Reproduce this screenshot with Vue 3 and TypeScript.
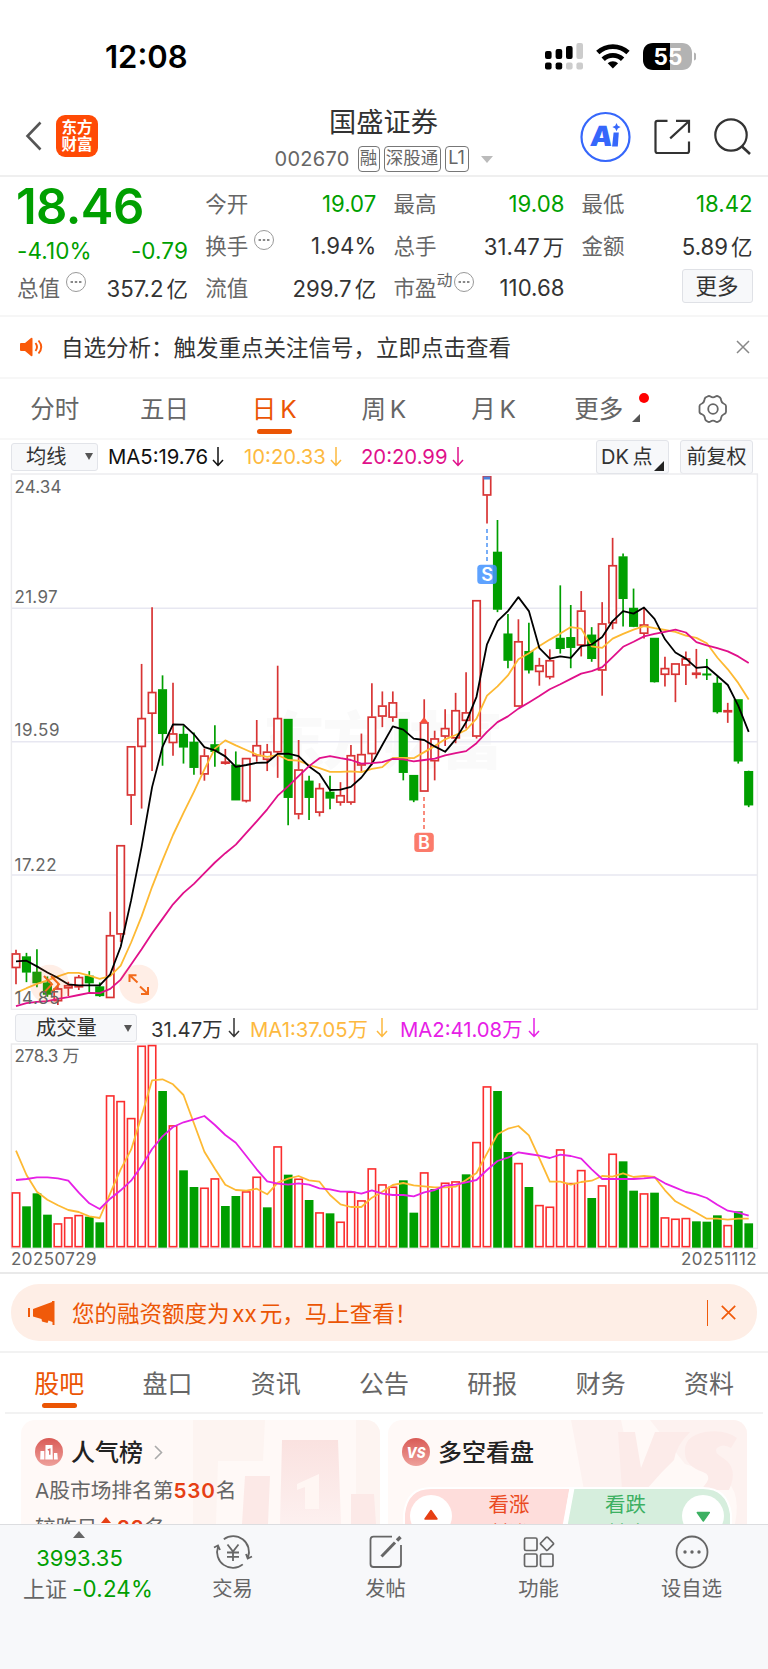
<script setup lang="ts">
type Candle = { up: boolean; high: number; top: number; bottom: number; low: number }

const STEP = 10.467
const FIRST = 16
const xAt = (i: number): number => FIRST + i * STEP
const priceY = (v: number): number => 470 + v / 2.8
const volumeY = (v: number): number => 1010 + v / 3

const rawCandles =
  'R1343,1354,1394,1440 G1352,1363,1406,1434 G1342,1406,1436,1448 G1418,1436,1468,1475 R1440,1452,1487,1498 R1433,1443,1451,1473 R1414,1420,1448,1456 G1403,1417,1436,1463 G1435,1447,1472,1475 R1237,1303,1478,1478 ' +
  'R1051,1051,1300,1322 R774,774,911,994 R543,695,775,948 R384,622,682,843 G575,615,738,828 R596,738,764,800 G716,740,776,822 G735,762,833,853 R780,800,852,870 G715,769,788,831 ' +
  'R781,817,822,825 G788,826,924,924 R807,807,927,931 R700,771,801,817 R767,789,811,843 R548,695,790,862 G698,698,917,995 R756,839,964,978 G856,871,917,980 R877,891,959,970 ' +
  'G856,902,919,950 R874,911,931,940 R770,799,931,937 R738,796,827,847 R597,691,795,827 R620,660,690,720 R620,651,693,705 G698,698,847,869 G855,855,924,930 R642,707,900,900 ' +
  'R730,752,815,869 R670,723,746,773 R624,673,751,765 R566,679,702,724 R365,365,746,752 R18,18,71,150 G140,230,390,398 G403,459,533,555 R418,480,662,662 G428,508,560,570 ' +
  'R526,547,565,604 R502,533,580,586 G323,471,500,514 G378,469,497,555 R339,394,491,522 G440,462,528,537 R370,430,561,632 R190,267,429,446 G234,243,360,438 G332,387,438,440 ' +
  'R386,433,458,472 G471,471,593,595 R523,555,573,606 R542,542,573,650 R508,528,547,602 R501,568,573,584 G529,571,573,588 G578,597,677,682 R652,673,678,708 G643,643,815,822 ' +
  'G842,844,938,944'

const candles: Candle[] = rawCandles.split(' ').map((s) => {
  const [high, top, bottom, low] = s.slice(1).split(',').map((n) => priceY(Number(n)))
  return { up: s[0] === 'R', high, top, bottom, low }
})

const rawVolumes =
  'R547 G589 G550 G614 R640 R622 R615 G620 G637 R256 R273 R324 R107 R105 G243 R346 G481 G531 R533 R505 G588 G558 R544 R500 G592 R409 G494 R506 G570 R607 G610 R635 R545 R571 R475 R523 ' +
  'R530 G511 G608 R487 G537 R518 R514 G493 R396 R229 G243 G426 R459 G531 R585 R590 R418 R519 R480 G564 R526 R431 G454 G542 R550 G548 R622 R626 R624 G634 G635 G616 R645 G604 G640'
const volumes = rawVolumes.split(' ').map((s) => ({ up: s[0] === 'R', top: volumeY(Number(s.slice(1))) }))
const VOL_BASE = volumeY(713)

const toPoints = (values: string, scale: (v: number) => number): string =>
  values
    .split(' ')
    .map((v, i) => `${xAt(i).toFixed(1)},${scale(Number(v)).toFixed(1)}`)
    .join(' ')

const ma5 = toPoints(
  '1376 1374 1390 1407 1422 1440 1443 1443 1443 1412 1335 1205 1055 888 775 712 713 740 776 785 802 831 826 820 819 795 794 801 830 851 896 895 887 861 823 770 718 727 752 756 774 789 754 706 635 488 423 395 356 395 499 528 522 526 493 489 468 423 395 402 385 417 474 511 528 554 551 576 602 660 733',
  priceY,
)
const ma10 = toPoints(
  '1464 1451 1439 1429 1418 1408 1408 1416 1425 1417 1388 1323 1250 1167 1093 1022 960 901 838 780 757 771 784 797 803 798 812 814 826 835 845 845 844 846 837 832 806 806 807 790 773 754 742 728 696 632 606 575 530 513 493 475 458 440 444 494 498 472 459 447 437 443 448 453 464 470 485 525 558 596 643',
  priceY,
)
const ma20 = toPoints(
  '1501 1493 1489 1487 1481 1476 1470 1464 1465 1453 1427 1385 1342 1297 1257 1216 1184 1159 1129 1099 1073 1049 1016 984 950 912 886 857 829 807 801 807 812 822 821 818 809 810 816 812 808 799 793 787 765 733 706 690 668 651 633 614 600 585 570 563 552 524 495 481 466 459 453 447 455 482 491 499 508 522 540',
  priceY,
)
const volMa1 = toPoints(
  '422 495 545 569 586 600 606 619 624 550 478 419 318 211 208 223 255 340 425 476 524 540 542 536 553 518 506 498 511 515 555 583 591 591 563 545 525 519 526 529 532 532 530 510 489 430 373 356 348 376 445 515 515 524 516 512 498 500 490 501 498 501 541 574 591 608 626 626 629 626 626',
  volumeY,
)
const volMa2 = toPoints(
  '510 507 502 502 505 512 548 580 597 566 541 512 468 417 379 351 337 328 318 345 375 398 438 478 514 521 524 520 524 535 538 545 545 551 541 551 555 555 559 547 540 527 524 517 510 480 453 443 427 432 437 444 434 438 446 478 507 507 507 507 505 502 520 533 546 553 564 584 602 608 617',
  volumeY,
)

const axisLabels = [
  { text: '24.34', y: 493, w: 47 },
  { text: '21.97', y: 602.5, w: 43 },
  { text: '19.59', y: 736, w: 45 },
  { text: '17.22', y: 870.5, w: 42 },
  { text: '14.85', y: 1004, w: 45 },
]

const periods = ['分时', '五日', '日 K', '周 K', '月 K', '更多']
const sections = ['股吧', '盘口', '资讯', '公告', '研报', '财务', '资料']
</script>

<template>
  <main class="page">
    <div class="status">
      <span class="clock">12:08</span>
      <svg class="status-icons" width="156" height="30" viewBox="540 41 156 30">
        <g fill="#000">
          <rect x="545" y="51" width="6.6" height="8" rx="2" />
          <rect x="555.6" y="49" width="6.6" height="10" rx="2" />
          <rect x="566" y="46" width="6.6" height="13" rx="2" />
          <rect x="545" y="62.5" width="6.6" height="7" rx="2" />
          <rect x="555.6" y="62.5" width="6.6" height="7" rx="2" />
        </g>
        <g fill="#ccc">
          <rect x="576.4" y="43" width="6.6" height="16" rx="2" />
          <rect x="566" y="62.5" width="6.6" height="7" rx="2" />
          <rect x="576.4" y="62.5" width="6.6" height="7" rx="2" />
        </g>
        <g fill="none" stroke="#000" stroke-width="4.8">
          <path d="M597.8 52.6a22 22 0 0 1 30.2 0" />
          <path d="M603.2 59.200a14 14 0 0 1 19.4 0" />
        </g>
        <path d="M612.9 68.500l-5.200-5.200a7.400 7.400 0 0 1 10.400 0z" fill="#000" />
        <path d="M670 43h-17c-6 0-10 4-10 10v7c0 6 4 10 10 10h17z" fill="#000" />
        <path d="M670 43h12c6 0 10 4 10 10v7c0 6-4 10-10 10h-12z" fill="#b3b3b3" />
        <path d="M694 52.5c3.5 1 3.5 7 0 8z" fill="#b3b3b3" />
        <text x="668" y="65" text-anchor="middle" class="battery">55</text>
      </svg>
    </div>

    <header class="header">
      <div class="head-left">
        <svg width="20" height="32" viewBox="0 0 20 32"><path d="M16.5 2.5 3.5 16l13 13.500" fill="none" stroke="#555" stroke-width="2.6" /></svg>
        <div class="logo"><span>东方</span><span>财富</span></div>
      </div>
      <div class="head-mid">
        <h1>国盛证券</h1>
        <div class="code-row">
          <span class="code">002670</span>
          <span class="badge b1">融</span><span class="badge b2">深股通</span><span class="badge b3">L1</span>
          <i class="caret"></i>
        </div>
      </div>
      <svg class="head-right" width="180" height="52" viewBox="578 111 180 52">
        <circle cx="605.5" cy="137" r="24" fill="none" stroke="#3667fb" stroke-width="2.2" />
        <text x="590" y="146.500" class="ai" transform="skewX(-6) translate(15 0)">A</text>
        <path d="M613.6 132.500h5.200l-1 14h-5.700z" fill="#3667fb" />
        <path d="M616.500 123l1.300 2.800 2.800 1.300-2.800 1.300-1.300 2.800-1.300-2.800-2.800-1.300 2.800-1.300z" fill="#3667fb" />
        <g fill="none" stroke="#333" stroke-width="2.200">
          <path d="M667.500 120.800H657.500q-2 0-2 2V151q0 2 2 2h29.500q2 0 2-2V141.500" />
          <path d="M676 120.800h13v12M688 122l-17.800 16.400" />
          <circle cx="731" cy="135" r="15.700" />
          <path d="M742 146.500l8 7.500" stroke-width="2.600" />
        </g>
      </svg>
    </header>

    <section class="quote">
      <div class="col c1">
        <b class="last">18.46</b>
        <div class="pair down chg"><span>-4.10%</span><span>-0.79</span></div>
        <div class="pair"><span class="lbl">总值<i class="info"></i></span><span>357.2<em>亿</em></span></div>
      </div>
      <div class="col">
        <div class="pair"><span class="lbl">今开</span><span class="down">19.07</span></div>
        <div class="pair"><span class="lbl">换手<i class="info"></i></span><span>1.94%</span></div>
        <div class="pair"><span class="lbl">流值</span><span>299.7<em>亿</em></span></div>
      </div>
      <div class="col">
        <div class="pair"><span class="lbl">最高</span><span class="down">19.08</span></div>
        <div class="pair"><span class="lbl">总手</span><span>31.47<em>万</em></span></div>
        <div class="pair"><span class="lbl">市盈<small>动</small><i class="info tight"></i></span><span>110.68</span></div>
      </div>
      <div class="col">
        <div class="pair"><span class="lbl">最低</span><span class="down">18.42</span></div>
        <div class="pair"><span class="lbl">金额</span><span>5.89<em>亿</em></span></div>
        <div class="pair end"><button class="more">更多</button></div>
      </div>
    </section>

    <section class="notice">
      <svg width="24" height="20" viewBox="0 0 24 20">
        <path d="M1 6h4l6-5q1.500-1 1.500 1v16q0 2-1.500 1L5 14H1q-1 0-1-1V7q0-1 1-1z" fill="#fa5a0a" />
        <path d="M15.500 6q3 4 0 8M18.500 3.500q5.500 6.500 0 13" fill="none" stroke="#fa5a0a" stroke-width="1.900" />
      </svg>
      <span class="notice-text">自选分析：触发重点关注信号，立即点击查看</span>
      <svg class="x" width="14" height="14" viewBox="0 0 14 14"><path d="M1 1l12 12M13 1 1 13" stroke="#888" stroke-width="1.500" /></svg>
    </section>

    <nav class="periods">
      <div v-for="p in periods" :key="p" class="period" :class="{ on: p === '日 K', menu: p === '更多' }">
        <span>{{ p }}</span>
      </div>
      <div class="period">
        <svg width="30" height="30" viewBox="0 0 30 30" fill="none" stroke="#666" stroke-width="1.800" stroke-linejoin="round">
          <path d="M9.500 2.500q1.500-1 3 0 2.500 1.800 5 0 1.500-1 3 0l1.500 1q1 1 1.200 3 .3 2 2.300 3 2.500 1 2.500 2.500v6q0 1.500-2.500 2.500-2 1-2.300 3-.2 2-1.200 3l-1.500 1q-1.500 1-3 0-2.500-1.800-5 0-1.500 1-3 0l-1.500-1q-1-1-1.200-3-.3-2-2.300-3Q1.500 19.500 1.500 18v-6q0-1.500 2.500-2.500 2-1 2.300-3 .2-2 1.200-3z" />
          <circle cx="15" cy="15" r="4.800" />
        </svg>
      </div>
    </nav>

    <div class="ma-bar">
      <button class="select s1">均线<i></i></button>
      <span class="m m5">MA5:19.76<svg class="arr" viewBox="0 0 12 20"><path d="M6 0v18M1 13l5 5.500 5-5.500" /></svg></span>
      <span class="m m10">10:20.33<svg class="arr" viewBox="0 0 12 20"><path d="M6 0v18M1 13l5 5.500 5-5.500" /></svg></span>
      <span class="m m20">20:20.99<svg class="arr" viewBox="0 0 12 20"><path d="M6 0v18M1 13l5 5.500 5-5.500" /></svg></span>
      <button class="tool dk">DK 点</button>
      <button class="tool">前复权</button>
    </div>

    <svg class="chart" width="768" height="537" viewBox="0 473 768 537">
      <text x="263" y="764" class="watermark" textLength="240">东方财富</text>
      <g stroke="#e7e7f1" stroke-width="1.500">
        <path d="M11 608.200H757M11 741.800H757M11 875H757" />
      </g>
      <rect x="11.400" y="474" width="746" height="535.300" fill="none" stroke="#ebebee" stroke-width="1.400" />
      <g v-for="(c, i) in candles" :key="i" :stroke="c.up ? '#d83434' : '#009f00'" stroke-width="1.700">
        <path v-if="c.high < c.top" :d="`M${xAt(i)} ${c.high}V${c.top}`" />
        <path v-if="c.low > c.bottom" :d="`M${xAt(i)} ${c.bottom}V${c.low}`" />
        <rect
          :x="xAt(i) - 3.700"
          :y="c.top + 0.400"
          width="7.400"
          :height="Math.max(c.bottom - c.top - 0.800, 0.300)"
          :fill="c.up ? '#fff' : '#009f00'"
        />
      </g>
      <rect x="483.500" y="476.500" width="6.800" height="3" fill="#4b82dd" />
      <path d="M424 717l4.500 6h-9z" fill="#f9513c" />
      <g fill="none" stroke-width="1.800" stroke-linejoin="round">
        <polyline :points="ma10" stroke="#fdb933" />
        <polyline :points="ma5" stroke="#000" />
        <polyline :points="ma20" stroke="#e0108a" />
      </g>
      <path d="M487 529v32" stroke="#6ba6f7" stroke-width="1.800" stroke-dasharray="4 3" />
      <rect x="477.300" y="564.700" width="19.500" height="19.300" rx="3.500" fill="#4694ff" fill-opacity=".87" />
      <text x="487" y="580.500" class="mark">S</text>
      <path d="M424 797v32" stroke="#f98070" stroke-width="1.800" stroke-dasharray="4 3" />
      <rect x="414.300" y="832.800" width="19.500" height="19.300" rx="3.500" fill="#fb7b6b" />
      <text x="424" y="848.600" class="mark">B</text>
      <circle cx="49.500" cy="984.300" r="19.500" fill="#fb7030" fill-opacity=".12" />
      <circle cx="138.700" cy="984.300" r="19.500" fill="#fb7030" fill-opacity=".12" />
      <g fill="none" stroke="#f26a1b" stroke-width="2">
        <path d="M44 976l8 8.300-8 8.300M51 976l8 8.300-8 8.300" />
        <path d="M129.500 982v-6.800h7M130 975.500l7.500 7M148 987v7h-7M147.500 993.500l-7.500-7" />
      </g>
      <text v-for="l in axisLabels" :key="l.text" x="14.500" :y="l.y" class="axis" :textLength="l.w">{{ l.text }}</text>
    </svg>

    <div class="vol-bar">
      <button class="select s2">成交量<i></i></button>
      <span class="m v0">31.47万<svg class="arr" viewBox="0 0 12 20"><path d="M6 0v18M1 13l5 5.500 5-5.500" /></svg></span>
      <span class="m v1">MA1:37.05万<svg class="arr" viewBox="0 0 12 20"><path d="M6 0v18M1 13l5 5.500 5-5.500" /></svg></span>
      <span class="m v2">MA2:41.08万<svg class="arr" viewBox="0 0 12 20"><path d="M6 0v18M1 13l5 5.500 5-5.500" /></svg></span>
    </div>

    <svg class="chart" width="768" height="206" viewBox="0 1043 768 206">
      <rect x="11.400" y="1044" width="746" height="204.300" fill="none" stroke="#e8e8ea" stroke-width="1.400" />
      <template v-for="(v, i) in volumes" :key="i">
        <rect v-if="v.up" :x="xAt(i) - 3.700" :y="v.top + 0.600" width="7.400" :height="VOL_BASE - v.top - 1.600" fill="#fff" stroke="#fb2e2e" stroke-width="1.600" />
        <rect v-else :x="xAt(i) - 4.300" :y="v.top" width="8.700" :height="VOL_BASE - v.top" fill="#009f00" />
      </template>
      <g fill="none" stroke-width="1.800" stroke-linejoin="round">
        <polyline :points="volMa1" stroke="#fdb933" />
        <polyline :points="volMa2" stroke="#e620e6" />
      </g>
      <text x="14.500" y="1061.500" class="axis" textLength="65">278.3 万</text>
    </svg>

    <div class="dates"><span>20250729</span><span>20251112</span></div>

    <div class="banner-wrap">
      <div class="banner">
        <svg width="28" height="24" viewBox="0 0 28 24">
          <path d="M1 7v9" stroke="#f05a0a" stroke-width="2" />
          <path d="M26.500 0v24h-2v-3l-4-1.500-1 2.500-5.500-1.500-.5-2.500L5 15.500V8L24 1V0z" fill="#f05a0a" />
        </svg>
        <span class="banner-text">您的融资额度为 xx 元，马上查看！</span>
        <i class="bar"></i>
        <svg width="15" height="15" viewBox="0 0 15 15"><path d="M.8.800l13.400 13.400M14.200.800.800 14.200" stroke="#f05a0a" stroke-width="1.700" /></svg>
      </div>
    </div>

    <nav class="sections">
      <div v-for="(s, i) in sections" :key="s" class="section" :class="{ on: i === 0 }">{{ s }}</div>
    </nav>

    <div class="cards">
      <article class="card">
        <svg class="card-bg" width="359" height="104" viewBox="21 1420 359 104">
          <defs>
            <linearGradient id="fade" x1="0" y1="0" x2="0" y2="1">
              <stop offset="0" stop-color="#fae2e0" /><stop offset="1" stop-color="#fdf0ef" />
            </linearGradient>
          </defs>
          <path d="M193 1420h72l-2 41h-45l-2 63h-23zM356 1420h24v104h-8l-16-30z" fill="#fdf4f1" />
          <path d="M282 1440h56l3 84h-61z" fill="url(#fade)" />
          <path d="M245 1476h25l-2 48h-26zM351 1494h23l2 30h-25z" fill="#fce9e7" />
          <path d="M297 1484l22-10v35h-14v-22l-8 3z" fill="#fff6f3" />
        </svg>
        <div class="card-title">
          <svg width="28" height="28" viewBox="0 0 28 28">
            <defs>
              <linearGradient id="disc" x1="0" y1="0" x2="0" y2="1">
                <stop offset="0" stop-color="#d95a55" /><stop offset="1" stop-color="#eea09b" />
              </linearGradient>
            </defs>
            <circle cx="14" cy="14" r="14" fill="url(#disc)" />
            <path d="M5.500 13h3.800v8.500H5.200zM10.500 7h7l.3 14.500h-7.500zM19 15h3.300l.5 6.500H19z" fill="#fff" />
            <path d="M12.800 12l2-.8v5.500" fill="none" stroke="#d96a65" stroke-width="1.400" />
          </svg>
          <span>人气榜</span>
          <svg width="9" height="15" viewBox="0 0 9 15"><path d="M1 1l6.500 6.500L1 14" fill="none" stroke="#aaa" stroke-width="1.600" /></svg>
        </div>
        <p class="rank">A股市场排名第<b>530</b>名</p>
        <p class="rank second">较昨日<i></i><b>22</b>名</p>
      </article>
      <article class="card">
        <svg class="card-bg" width="359" height="104" viewBox="388 1420 359 104">
          <path d="M571 1420h50l15 70h-52zM650 1420h97v104h-12q8-40-20-50l-30-10z" fill="#fdf2f0" />
          <path d="M618 1432h17l6 36 14-36h35q-14 14-16 28l-12 12-16 18h-24z" fill="#fcebe9" />
          <path d="M737 1438q-12-9-32-6-22 4-20 22 1 12 18 18 8 3 4 10l-6 8h28q10-22-6-32-10-6-6-10 6-5 14 0z" fill="#fcebe9" />
        </svg>
        <div class="card-title">
          <svg width="28" height="28" viewBox="0 0 28 28">
            <circle cx="14" cy="14" r="14" fill="url(#disc)" />
            <text x="14" y="19.500" class="vs" textLength="19" lengthAdjust="spacingAndGlyphs">VS</text>
          </svg>
          <span>多空看盘</span>
        </div>
        <div class="vote">
          <svg width="330" height="37" viewBox="402 1487 330 37">
            <path d="M570.500 1488H431q-24 0-27 26v20h159z" fill="#fedddb" stroke="#fff" stroke-width="2" />
            <path d="M573.500 1488H703q24 0 28 26v20H565z" fill="#d6eedd" stroke="#fff" stroke-width="2" />
            <path d="M571.500 1487l-7 38" stroke="#fff" stroke-width="3.500" />
            <circle cx="431" cy="1516" r="21" fill="#fff" />
            <circle cx="703" cy="1516" r="21" fill="#fff" />
            <path d="M431 1510.500l6 8.500h-12z" fill="#e63f14" stroke="#e63f14" stroke-width="1.500" stroke-linejoin="round" />
            <path d="M703.300 1521l-6-8.500h12z" fill="#3cb062" stroke="#3cb062" stroke-width="1.500" stroke-linejoin="round" />
            <text x="509" y="1512" class="vote-t" fill="#ea4a22">看涨</text>
            <text x="625.500" y="1512" class="vote-t" fill="#3cb062">看跌</text>
            <text x="509" y="1538.500" class="vote-s" fill="#ea4a22">料涨</text>
            <text x="625.500" y="1538.500" class="vote-s" fill="#3cb062">料跌</text>
          </svg>
        </div>
      </article>
    </div>

    <footer class="bottom">
      <div class="tab index">
        <i class="up"></i>
        <span class="down">3993.35</span>
        <span class="idx">上证 <span class="down pct">-0.24%</span></span>
      </div>
      <div class="tab">
        <svg width="40" height="36" viewBox="0 0 40 36" fill="none" stroke="#666" stroke-width="1.800">
          <path d="M10.800 5.200A15.800 15.800 0 0 1 35 23.400M29.800 30.400A15.800 15.800 0 0 1 5.100 12.600M1 13.500l4-2 2 4.500M39 22.500l-4.300 2-1.700-4.500" />
          <path d="M14.500 10.500l5.500 7 5.500-7M20 17.500v9.500M14 18.500h12M14 22.800h12" />
        </svg>
        <span>交易</span>
      </div>
      <div class="tab">
        <svg width="40" height="36" viewBox="0 0 40 36" fill="none" stroke="#666" stroke-width="1.800">
          <path d="M26 2.700H7.500q-3 0-3 3V30q0 3 3 3H32q3 0 3-3V11" />
          <path d="M15.500 22.500 29 8.500" stroke-width="3" /><path d="M31 6.500l3.500-3.500" stroke-width="3.400" />
        </svg>
        <span>发帖</span>
      </div>
      <div class="tab">
        <svg width="40" height="36" viewBox="0 0 40 36" fill="none" stroke="#666" stroke-width="1.700">
          <rect x="5.500" y="4" width="12.500" height="12.500" rx="1.500" />
          <rect x="5.500" y="20" width="12.500" height="12.500" rx="1.500" />
          <rect x="21.500" y="20" width="12.500" height="12.500" rx="1.500" />
          <path d="M21.800 10.400q-.8-.7 0-1.400l5.400-5.600q.8-.7 1.500 0l5.500 5.600q.7.700 0 1.400l-5.500 5.600q-.7.700-1.500 0z" />
        </svg>
        <span>功能</span>
      </div>
      <div class="tab">
        <svg width="40" height="36" viewBox="0 0 40 36" fill="none" stroke="#666" stroke-width="1.800">
          <circle cx="20" cy="18" r="15.500" />
          <g fill="#666" stroke="none"><circle cx="13" cy="18" r="1.700" /><circle cx="20" cy="18" r="1.700" /><circle cx="27" cy="18" r="1.700" /></g>
        </svg>
        <span>设自选</span>
      </div>
    </footer>
  </main>
</template>

<style>
body {
  margin: 0;
  background: #fff;
}
</style>

<style scoped>
* {
  box-sizing: border-box;
}
.page {
  width: 768px;
  height: 1669px;
  overflow: hidden;
  display: flex;
  flex-direction: column;
  background: #fff;
  color: #333;
  font-family: Inter, 'Noto Sans CJK SC', sans-serif;
  white-space: nowrap;
}
.page > * {
  flex: none;
}
svg {
  display: block;
  flex: none;
}
button {
  font: inherit;
  color: inherit;
  padding: 0;
  margin: 0;
}
h1,
p {
  margin: 0;
  font-weight: 400;
}
i,
em {
  font-style: normal;
}
.status {
  height: 88px;
  padding: 41px 72px 0 105px;
  display: flex;
  justify-content: space-between;
}
.clock {
  font-size: 31px;
  line-height: 32px;
  font-weight: 600;
  color: #000;
}
.battery {
  font: 700 22.5px Inter, sans-serif;
  fill: #fff;
}
.header {
  height: 89px;
  border-bottom: 2px solid #efefef;
  display: grid;
  grid-template-columns: 180px 1fr 190px;
}
.head-left {
  display: flex;
  align-items: center;
  padding: 9px 0 0 24px;
  gap: 12px;
}
.logo {
  width: 42px;
  height: 42px;
  border-radius: 9px;
  background: #ff4a05;
  color: #fff;
  font-size: 15.500px;
  font-weight: 700;
  line-height: 17px;
  padding-top: 4px;
  display: flex;
  flex-direction: column;
  align-items: center;
}
.head-mid {
  display: flex;
  flex-direction: column;
  align-items: center;
  padding-left: 9px;
}
h1 {
  font-size: 27.200px;
  line-height: 40px;
  margin-top: 15px;
}
.code-row {
  display: flex;
  align-items: center;
  height: 26px;
  margin-top: 3px;
  color: #666;
}
.code {
  font-size: 20px;
  letter-spacing: 0.3px;
  width: 83px;
}
.badge {
  height: 26px;
  border: 1.500px solid #777;
  border-radius: 4px;
  font-size: 17.500px;
  line-height: 22px;
  text-align: center;
  margin-right: 4px;
}
.b1 {
  width: 22px;
}
.b2 {
  width: 57px;
}
.b3 {
  width: 24px;
  font-size: 18px;
}
.caret {
  border: 6px solid transparent;
  border-top: 7px solid #bbb;
  border-bottom: 0;
  margin-left: 8px;
}
.head-right {
  margin-top: 23px;
}
.ai {
  font: 900 28px Inter, sans-serif;
  fill: #3667fb;
}
.quote {
  height: 140px;
  border-bottom: 2px solid #f6f6f6;
  padding: 5px 15px 0 17px;
  display: grid;
  grid-template-columns: repeat(4, 171px);
  column-gap: 17.200px;
}
.col {
  display: flex;
  flex-direction: column;
}
.pair {
  height: 42px;
  display: flex;
  justify-content: space-between;
  align-items: center;
  font-size: 22.200px;
  letter-spacing: 0;
}
.pair em {
  margin-left: 3px;
  font-size: 21.500px;
}
.lbl {
  color: #666;
  font-size: 21.500px;
  display: flex;
  padding-bottom: 2px;
}
.lbl small {
  font-size: 16px;
  line-height: 16px;
  margin-top: 1px;
}
.info {
  width: 20px;
  height: 20px;
  border: 1.500px solid #999;
  border-radius: 50%;
  margin: 1px 0 0 6px;
  background: radial-gradient(circle, #888 1px, transparent 1.500px) center / 4.200px 16px;
  background-clip: content-box;
  padding: 0 2px;
}
.info.tight {
  margin-left: 2px;
}
.end {
  justify-content: flex-end;
}
.c1 .last {
  height: 49px;
  line-height: 50px;
  font-size: 49px;
  font-weight: 600;
  letter-spacing: -0.6px;
  margin-left: -1px;
  color: #009f00;
}
.pair.chg {
  height: 36px;
  padding-top: 2px;
  font-size: 22.500px;
  letter-spacing: 0.1px;
}
.chg + .pair {
  height: 41px;
}
.down {
  color: #009f00;
}
.more {
  width: 71px;
  height: 34px;
  border: 1.500px solid #dfe1e6;
  border-radius: 3px;
  background: #f7f8fa;
  font-size: 21.500px;
  line-height: 29px;
  margin-top: -2px;
}
.notice {
  height: 62px;
  border-bottom: 2px solid #f7f7f7;
  display: flex;
  align-items: center;
  padding: 0 18px 0 20px;
}
.notice-text {
  font-size: 22.500px;
  margin-left: 17px;
  padding-bottom: 3px;
  flex: 1;
}
.periods {
  height: 61px;
  border-bottom: 2px solid #f7f7f7;
  display: grid;
  grid-template-columns: repeat(7, 109.700px);
  color: #666;
  font-size: 24.500px;
  word-spacing: -3px;
}
.period {
  display: flex;
  align-items: center;
  justify-content: center;
  position: relative;
}
.period span {
  padding-bottom: 2px;
}
.period.on {
  color: #eb5504;
}
.period.on::after,
.section.on::after {
  content: '';
  position: absolute;
  bottom: 4px;
  left: 50%;
  margin-left: -17.500px;
  width: 35px;
  height: 5px;
  border-radius: 3px;
  background: #eb5504;
}
.period.menu span {
  margin-right: 9px;
}
.period.menu::before {
  content: '';
  position: absolute;
  width: 10px;
  height: 10px;
  border-radius: 50%;
  background: #f00;
  right: 9px;
  top: 14px;
}
.period.menu::after {
  content: '';
  position: absolute;
  border: 4px solid #555;
  border-top-color: transparent;
  border-left-color: transparent;
  right: 18px;
  top: 35px;
}
.ma-bar,
.vol-bar {
  display: flex;
  align-items: center;
  height: 33px;
  padding: 0 15px 0 11px;
}
.vol-bar {
  padding: 3px 15px 0 15px;
}
.select {
  width: 87px;
  height: 28px;
  border: 1.500px solid #e2e4e9;
  border-radius: 3px;
  background: #f7f8fa;
  font-size: 20.300px;
  line-height: 24px;
  display: flex;
  align-items: center;
  padding-left: 14px;
  justify-content: space-between;
  padding-right: 4px;
}
.select i {
  border: 4.500px solid transparent;
  border-top: 7px solid #555;
  border-bottom: 0;
}
.m {
  display: flex;
  align-items: center;
  font-size: 20.300px;
}
.arr {
  width: 12px;
  height: 20px;
  margin-left: 4px;
  fill: none;
  stroke: currentColor;
  stroke-width: 1.500;
}
.m5 {
  color: #111;
  margin-left: 10px;
  width: 136px;
}
.m10 {
  color: #fdb93f;
  width: 117px;
}
.m20 {
  color: #e0108a;
  flex: 1;
}
.tool {
  width: 73px;
  height: 34px;
  border: 1.500px solid #e2e4e9;
  border-radius: 3px;
  background: #f7f8fa;
  font-size: 20px;
  line-height: 30px;
  margin-left: 11px;
}
.dk {
  position: relative;
  text-align: left;
  padding-left: 4px;
  word-spacing: -2px;
}
.dk::after {
  content: '';
  position: absolute;
  right: 4px;
  bottom: 2px;
  border: 5px solid #222;
  border-top-color: transparent;
  border-left-color: transparent;
}
.s2 {
  width: 122px;
  padding-left: 20px;
}
.v0 {
  margin-left: 14px;
  width: 99px;
}
.v0 .arr {
  margin-left: 6px;
}
.v1 {
  color: #fdb93f;
  width: 150px;
}
.v1 .arr {
  margin-left: 8px;
}
.v2 {
  color: #e620e6;
}
.v2 .arr {
  margin-left: 6px;
}
.axis {
  font: 400 17px Inter, 'Noto Sans CJK SC', sans-serif;
  fill: #666;
}
.watermark {
  font: 900 62px 'Noto Sans CJK SC', sans-serif;
  fill: #fafafa;
}
.mark {
  font: 600 18px Inter, sans-serif;
  fill: #fff;
  text-anchor: middle;
}
.dates {
  height: 25px;
  border-bottom: 2px solid #e9e9e9;
  display: flex;
  justify-content: space-between;
  padding: 0 11px;
  font-size: 17px;
  letter-spacing: 0.400px;
  line-height: 21px;
  color: #666;
}
.banner-wrap {
  height: 79px;
  border-bottom: 2px solid #f2f2f2;
  padding: 10px 11px 0;
}
.banner {
  height: 57px;
  border-radius: 28px;
  background: #feeee6;
  color: #eb5504;
  display: flex;
  align-items: center;
  padding: 0 21px 0 17px;
}
.banner-text {
  font-size: 22.500px;
  margin-left: 16px;
  padding-bottom: 2px;
  word-spacing: -3.500px;
  flex: 1;
}
.bar {
  width: 1.500px;
  height: 26px;
  background: #f05a0a;
  margin-right: 13px;
}
.sections {
  height: 61px;
  margin: 0 5px;
  border-bottom: 2px solid #f2f2f2;
  display: grid;
  grid-template-columns: repeat(7, 108.300px);
  font-size: 25px;
  color: #666;
}
.section {
  position: relative;
  display: flex;
  align-items: center;
  justify-content: center;
  padding-bottom: 2px;
}
.section.on {
  color: #eb5504;
}
.cards {
  height: 110px;
  padding: 6px 21px 0;
  display: flex;
  gap: 8px;
  overflow: hidden;
}
.card {
  flex: 1;
  height: 140px;
  border-radius: 14px;
  background: #fff9f7;
  position: relative;
  overflow: hidden;
  padding: 0 14px;
}
.card > * {
  position: relative;
}
.card .card-bg {
  position: absolute;
  left: 0;
  top: 0;
}
.card-title {
  display: flex;
  align-items: center;
  height: 28px;
  margin-top: 18px;
  font-size: 24px;
  font-weight: 500;
  color: #222;
}
.card-title span {
  margin: 0 11px 0 8px;
  padding-bottom: 4px;
}
.rank {
  font-size: 20.700px;
  line-height: 30px;
  margin-top: 10px;
  color: #666;
}
.rank b {
  color: #e63f14;
  font-weight: 600;
  letter-spacing: 0.8px;
}
.rank.second {
  margin-top: 7px;
  display: flex;
}
.second i {
  border: 5px solid transparent;
  border-top: 0;
  border-bottom: 6px solid #e63f14;
  align-self: flex-start;
  margin: 4px 6px 0 4px;
}
.vs {
  font: italic 800 14.500px Inter, sans-serif;
  fill: #fff;
  text-anchor: middle;
}
.vote {
  margin-top: 21px;
}
.vote-t {
  font: 400 20.500px 'Noto Sans CJK SC', sans-serif;
  text-anchor: middle;
}
.vote-s {
  font: 400 18px 'Noto Sans CJK SC', sans-serif;
  text-anchor: middle;
}
.bottom {
  height: 145px;
  border-top: 1.500px solid #dcdde0;
  background: #f7f8fa;
  display: grid;
  grid-template-columns: repeat(5, 153px);
  padding: 9px 0 0 3px;
  color: #666;
  font-size: 20.300px;
}
.tab {
  display: flex;
  flex-direction: column;
  align-items: center;
}
.tab > span {
  line-height: 30px;
  margin-top: 4px;
}
.index {
  font-size: 22px;
}
.up {
  border: 6px solid transparent;
  border-top: 0;
  border-bottom: 7px solid #666;
  margin-left: -2px;
  margin-top: -3px;
}
.index > .down {
  margin-top: 5px;
}
.index .idx {
  margin-top: 1px;
  margin-left: 17px;
  word-spacing: -1px;
}
.pct {
  font-size: 22.300px;
  letter-spacing: 0.200px;
}
</style>
